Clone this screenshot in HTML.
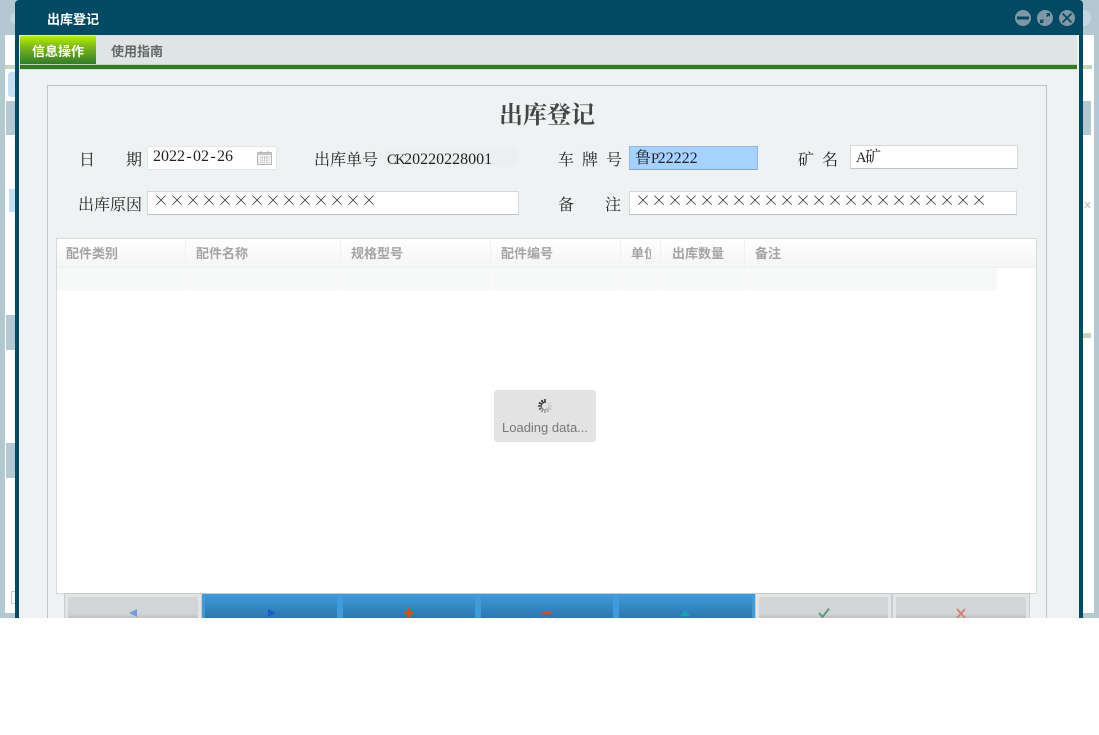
<!DOCTYPE html>
<html lang="zh">
<head>
<meta charset="utf-8">
<title>出库登记</title>
<style>
html,body{margin:0;padding:0;background:#fff;}
#page{position:relative;width:1099px;height:735px;overflow:hidden;background:#fff;font-family:"WenQuanYi Zen Hei","Noto Sans CJK SC",sans-serif;}
#clip{position:absolute;left:0;top:0;width:1099px;height:618px;overflow:hidden;background:#b3c8d0;}
.a{position:absolute;}
.t{position:absolute;white-space:nowrap;line-height:20px;height:20px;}
.lb{font-size:16px;color:#222;font-family:"Noto Serif CJK SC",serif;}
.val{font-size:16px;color:#222;font-family:"Liberation Serif","Noto Serif CJK SC",serif;}
.val b{font-weight:normal;font-size:16px;font-family:"Noto Serif CJK SC",serif;}
.val u{text-decoration:none;font-size:14.500px;letter-spacing:-1.500px;}
.val i{font-style:normal;display:inline-block;width:8px;text-align:center;}
.inp{position:absolute;background:#fff;box-sizing:border-box;border:1px solid #d6d8d8;border-bottom:1px solid #bfc2c2;}
.th{position:absolute;top:244px;font-size:13px;font-weight:bold;color:#a4a4a4;line-height:18px;white-space:nowrap;overflow:hidden;}
.dv{position:absolute;top:239px;width:1px;height:28px;background:#f0f1f1;}
.dr{position:absolute;top:268px;width:2px;height:23px;background:#fff;opacity:.35;}
.btn{position:absolute;top:593px;height:30px;box-sizing:border-box;}
.grey{background:#e2e5e5;border:1px solid #c9cccc;border-bottom:0;padding:0;}
.grey i{position:absolute;left:3px;right:3px;top:3px;bottom:0;background:linear-gradient(#d4d7d7,#d1d4d4 65%,#c0c3c3 80%);}
.blue{background:#3f9bd9;border-top:1px solid #c4cccc;}
.blue i{position:absolute;left:3px;right:3px;top:2px;bottom:0;background:linear-gradient(#3d98d6,#2a75ae 85%);}
.btn svg{position:absolute;}
</style>
</head>
<body>
<div id="page">
<div id="clip">
  <!-- background page -->
  <div class="a" style="left:10px;top:12px;width:12px;height:12px;border-radius:50%;background:#c4d5db;"></div>
  <div class="a" style="left:1077px;top:10px;width:14px;height:16px;border-radius:50%;background:#c8d8de;"></div>
  <div class="a" style="left:5px;top:35px;width:1089px;height:578px;background:#fff;"></div>
  <div class="a" style="left:5px;top:65px;width:1087px;height:4px;background:#c1d9b9;"></div>
  <div class="a" style="left:8px;top:72px;width:10px;height:25px;background:#c6def2;border-radius:3px;"></div>
  <div class="a" style="left:6px;top:101px;width:9px;height:34px;background:#b3c8d0;"></div>
  <div class="a" style="left:9px;top:189px;width:6px;height:23px;background:#c6def2;"></div>
  <div class="a" style="left:6px;top:315px;width:9px;height:35px;background:#b3c8d0;"></div>
  <div class="a" style="left:6px;top:443px;width:9px;height:35px;background:#b3c8d0;"></div>
  <div class="a" style="left:1083px;top:101px;width:8px;height:34px;background:#b3c8d0;"></div>
  <div class="a" style="left:1083px;top:333px;width:8px;height:5px;background:#c1d9b9;"></div>
  <svg class="a" style="left:1084px;top:201px;" width="7" height="8" viewBox="0 0 7 8"><path d="M1 1l5 6M6 1L1 7" stroke="#bbb" stroke-width="1" fill="none"/></svg>
  <div class="a" style="left:11px;top:591px;width:5px;height:13px;border:1px solid #ccc;box-sizing:border-box;"></div>

  <!-- modal window -->
  <div class="a" style="left:15px;top:0;width:1068px;height:618px;background:#004a63;border-radius:4px 4px 0 0;"></div>
  <div class="a" style="left:19px;top:35px;width:1060px;height:583px;background:#eef2f3;"></div>
  <div class="t" style="left:47px;top:9px;font-size:13px;font-weight:bold;color:#fff;">出库登记</div>

  <!-- window buttons -->
  <svg class="a" style="left:1013px;top:8px;" width="64" height="20" viewBox="0 0 64 20">
    <circle cx="10" cy="10" r="8" fill="#7f98a4"/>
    <rect x="4" y="8.500" width="12" height="3" fill="#004a63"/>
    <circle cx="32" cy="10" r="8" fill="#7f98a4"/>
    <path d="M28 14l2.500-2.500M36 6l-2.500 2.500" stroke="#004a63" stroke-width="1.500" fill="none"/>
    <path d="M27 15v-4l4 4zM37 5v4l-4-4z" fill="#004a63"/>
    <circle cx="54" cy="10" r="8" fill="#7f98a4"/>
    <path d="M49.500 5.500l9 9M58.500 5.500l-9 9" stroke="#004a63" stroke-width="1.700" fill="none"/>
  </svg>

  <!-- tabs -->
  <div class="a" style="left:20px;top:35px;width:1057px;height:30px;background:#dfe4e4;"></div>
  <div class="a" style="left:20px;top:36px;width:76px;height:28px;background:linear-gradient(#b8f000,#7ab81a 40%,#2f7d28);"></div>
  <div class="t" style="left:32px;top:41px;font-size:13px;font-weight:bold;color:#fff;">信息操作</div>
  <div class="t" style="left:111px;top:41px;font-size:13px;font-weight:bold;color:#666;">使用指南</div>
  <div class="a" style="left:20px;top:64px;width:1057px;height:1px;background:#c4d2c0;"></div>
  <div class="a" style="left:20px;top:65px;width:1057px;height:4px;background:#317c1e;"></div>
  <div class="a" style="left:20px;top:69px;width:1058px;height:1px;background:#d8e4d8;"></div>

  <!-- panel -->
  <div class="a" style="left:47px;top:85px;width:1000px;height:540px;box-sizing:border-box;border:1px solid #c2c5c5;"></div>
  <div class="t" style="left:499px;top:100px;height:26px;line-height:26px;font-size:24px;font-weight:bold;color:#444;font-family:'Noto Serif CJK SC',serif;">出库登记</div>

  <!-- row 1 -->
  <div class="t lb" style="left:79px;top:149px;">日</div>
  <div class="t lb" style="left:126px;top:149px;">期</div>
  <div class="inp" style="left:147px;top:146px;width:130px;height:24px;border:1px solid #e4e7e7;"></div>
  <div class="t val" style="left:153px;top:147px;">2022<i>-</i>02<i>-</i>26</div>
  <svg class="a" style="left:256px;top:150px;" width="17" height="16" viewBox="0 0 17 16">
    <rect x="1.500" y="2.500" width="14" height="12" fill="#f2f2f2" stroke="#b5b5b5"/>
    <rect x="1.500" y="2.500" width="14" height="2.500" fill="#c4c4c4"/>
    <path d="M4 7.500h9M4 10h9M4 12.500h9M6 6v8M8.500 6v8M11 6v8" stroke="#c4c4c4" stroke-width="1" stroke-dasharray="1 1"/>
    <path d="M5 1v3M12 1v3" stroke="#b0b0b0"/>
  </svg>
  <div class="t lb" style="left:314px;top:149px;">出库单号</div>
  <div class="a" style="left:385px;top:148px;width:132px;height:17px;background:#ebefef;"></div>
  <div class="t val" style="left:387px;top:150px;"><u>CK</u>20220228001</div>

  <div class="t lb" style="left:558px;top:149px;">车</div>
  <div class="t lb" style="left:582px;top:149px;">牌</div>
  <div class="t lb" style="left:606px;top:149px;">号</div>
  <div class="a" style="left:629px;top:146px;width:129px;height:24px;box-sizing:border-box;background:#a6d2ff;border:1px solid #8fb8dc;border-bottom:1px solid #85a9cc;"></div>
  <div class="t val" style="left:635px;top:147px;"><b>鲁</b><u>P</u>22222</div>

  <div class="t lb" style="left:798px;top:149px;">矿</div>
  <div class="t lb" style="left:822px;top:149px;">名</div>
  <div class="inp" style="left:850px;top:145px;width:168px;height:24px;"></div>
  <div class="t val" style="left:856px;top:146px;"><u>A</u><b>矿</b></div>

  <!-- row 2 -->
  <div class="t lb" style="left:78px;top:194px;">出库原因</div>
  <div class="inp" style="left:147px;top:191px;width:372px;height:24px;"></div>
  <div class="t val" style="left:153px;top:190px;"><b>××××××××××××××</b></div>
  <div class="t lb" style="left:558px;top:194px;">备</div>
  <div class="t lb" style="left:605px;top:194px;">注</div>
  <div class="inp" style="left:629px;top:191px;width:388px;height:24px;"></div>
  <div class="t val" style="left:635px;top:190px;"><b>××××××××××××××××××××××</b></div>

  <!-- grid -->
  <div class="a" style="left:56px;top:238px;width:981px;height:356px;box-sizing:border-box;background:#fff;border:1px solid #d8dada;"></div>
  <div class="a" style="left:57px;top:239px;width:979px;height:28px;background:linear-gradient(#fff,#f4f5f5);"></div>
  <div class="a" style="left:57px;top:267px;width:979px;height:1px;background:#eef0f0;"></div>
  <div class="a" style="left:57px;top:268px;width:940px;height:23px;background:#f7f8f8;"></div>
  <div class="dv" style="left:185px;"></div><div class="dv" style="left:340px;"></div><div class="dv" style="left:490px;"></div><div class="dv" style="left:620px;"></div><div class="dv" style="left:660px;"></div><div class="dv" style="left:744px;"></div>
  <div class="dr" style="left:186px;"></div><div class="dr" style="left:341px;"></div><div class="dr" style="left:491px;"></div><div class="dr" style="left:621px;"></div><div class="dr" style="left:661px;"></div><div class="dr" style="left:746px;"></div>
  <div class="th" style="left:66px;">配件类别</div>
  <div class="th" style="left:196px;">配件名称</div>
  <div class="th" style="left:351px;">规格型号</div>
  <div class="th" style="left:501px;">配件编号</div>
  <div class="th" style="left:631px;width:20px;">单位</div>
  <div class="th" style="left:672px;">出库数量</div>
  <div class="th" style="left:755px;">备注</div>

  <!-- loading -->
  <div class="a" style="left:494px;top:390px;width:102px;height:52px;background:#e3e3e3;border-radius:3px;"></div>
  <svg class="a" style="left:536px;top:397px;" width="18" height="18" viewBox="0 0 18 18">
    <g stroke-width="1.600" stroke-linecap="butt">
      <path d="M9 2v4" stroke="#333"/>
      <path d="M5.500 3l2 3.400" stroke="#222"/>
      <path d="M2.900 5.500l3.400 2" stroke="#333"/>
      <path d="M2 9h4" stroke="#444"/>
      <path d="M2.900 12.500l3.400-2" stroke="#666"/>
      <path d="M5.500 15l2-3.400" stroke="#888"/>
      <path d="M9 16v-4" stroke="#999"/>
      <path d="M12.500 15l-2-3.400" stroke="#aaa"/>
      <path d="M15.100 12.500l-3.400-2" stroke="#bbb"/>
      <path d="M16 9h-4" stroke="#ccc"/>
      <path d="M15.100 5.500l-3.400 2" stroke="#d6d6d6"/>
      <path d="M12.500 3l-2 3.400" stroke="#ddd"/>
    </g>
  </svg>
  <div class="t" style="left:502px;top:418px;font:13px/20px 'Liberation Sans',sans-serif;color:#777;">Loading data...</div>

  <!-- buttons -->
  <div class="btn grey" style="left:64px;width:138px;"><i></i>
    <svg style="left:64px;top:14px;" width="10" height="10" viewBox="0 0 10 10"><path d="M0 5L8 1v8z" fill="#6a9fd8"/></svg></div>
  <div class="btn blue" style="left:202px;width:138px;"><i></i>
    <svg style="left:65px;top:14px;" width="10" height="10" viewBox="0 0 10 10"><path d="M1 1l8 4-8 4z" fill="#1460c8"/></svg></div>
  <div class="btn blue" style="left:340px;width:138px;"><i></i>
    <svg style="left:64px;top:14px;" width="10" height="10" viewBox="0 0 10 10"><path d="M5 0v10M0 5h10" stroke="#e8480c" stroke-width="2.400"/></svg></div>
  <div class="btn blue" style="left:478px;width:138px;"><i></i>
    <svg style="left:63px;top:14px;" width="12" height="10" viewBox="0 0 12 10"><path d="M1 5h10" stroke="#e8480c" stroke-width="2.600"/></svg></div>
  <div class="btn blue" style="left:616px;width:139px;"><i></i>
    <svg style="left:63px;top:15px;" width="12" height="8" viewBox="0 0 12 8"><path d="M6 1l5 6H1z" fill="#12a4b4"/></svg></div>
  <div class="btn grey" style="left:755px;width:137px;"><i></i>
    <svg style="left:61px;top:13px;" width="14" height="12" viewBox="0 0 14 12"><path d="M2 6l3.500 4L12 1.500" stroke="#5c9c78" stroke-width="2" fill="none"/></svg></div>
  <div class="btn grey" style="left:892px;width:138px;"><i></i>
    <svg style="left:62px;top:13px;" width="12" height="12" viewBox="0 0 12 12"><path d="M2 2l8 9M10 2l-8 9" stroke="#dc7c74" stroke-width="1.800" fill="none"/></svg></div>
</div>
</div>
</body>
</html>
